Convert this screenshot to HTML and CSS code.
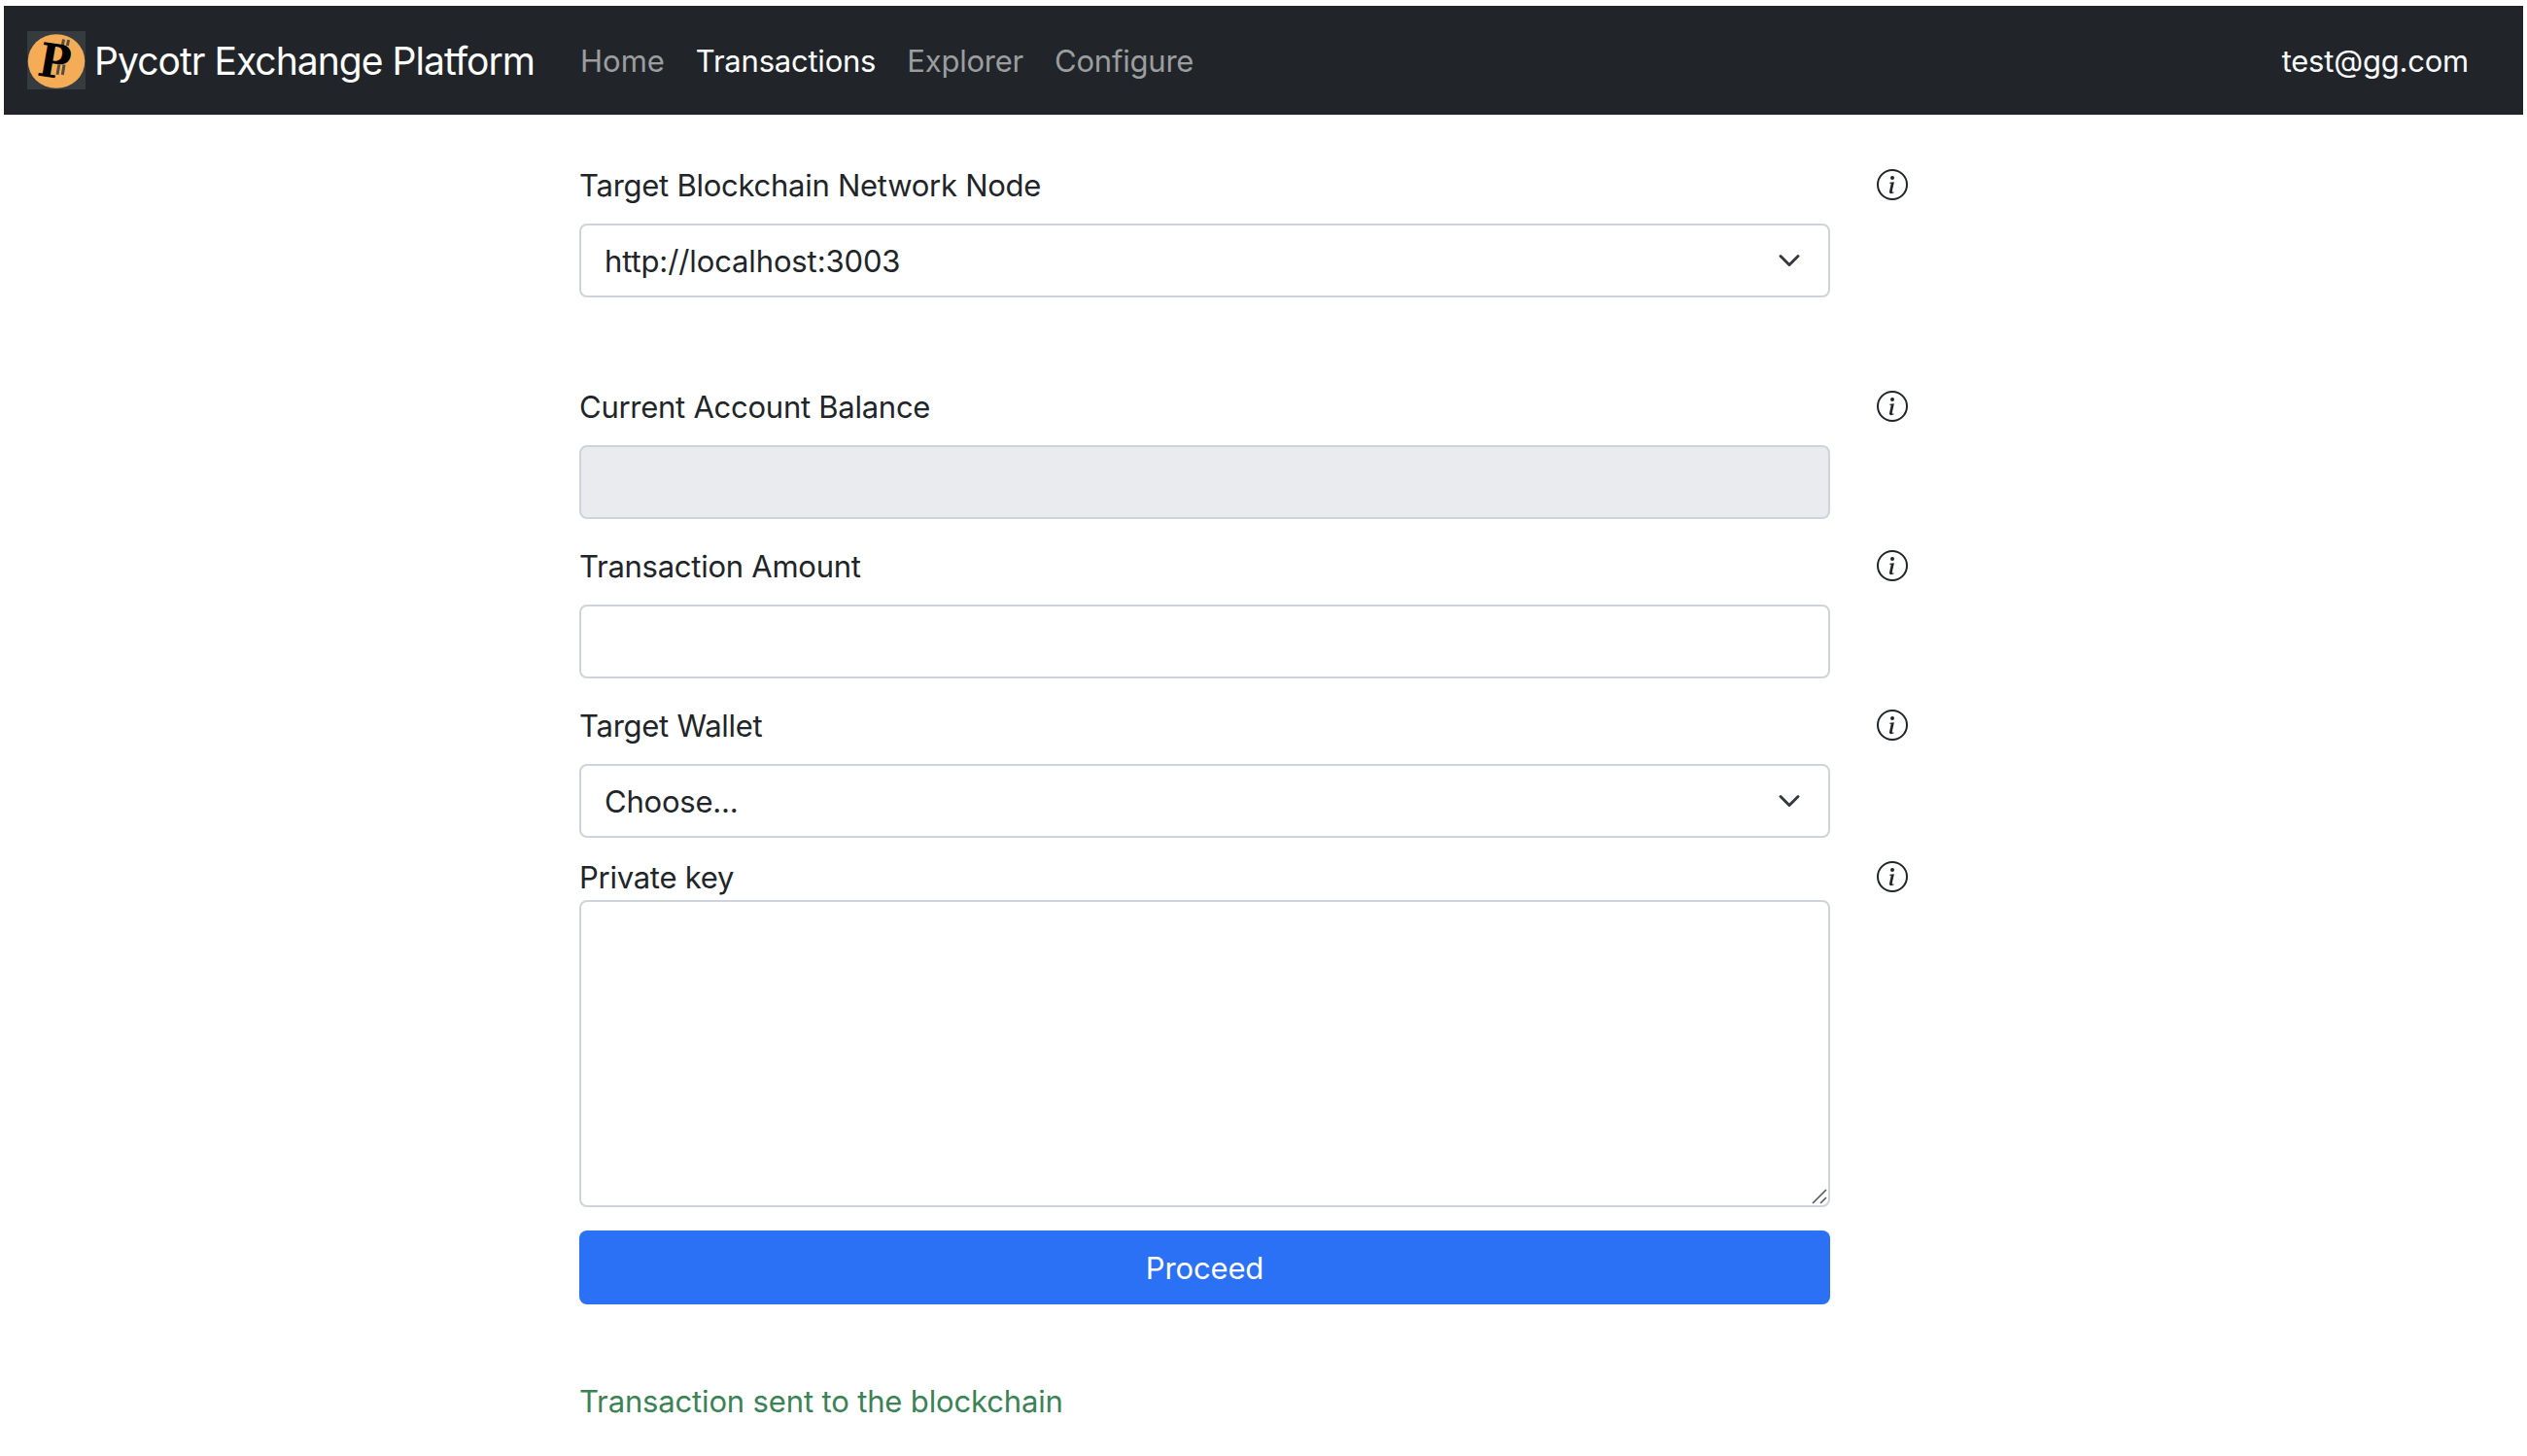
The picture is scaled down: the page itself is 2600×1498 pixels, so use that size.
FILE: index.html
```html
<!DOCTYPE html>
<html lang="en">
<head>
<meta charset="utf-8">
<title>Pycotr Exchange Platform</title>
<link rel="stylesheet" href="styles.css">
</head>
<body>
<svg class="symbols" aria-hidden="true">
  <symbol id="info" viewBox="0 0 16 16">
    <path d="M8 15A7 7 0 1 1 8 1a7 7 0 0 1 0 14zm0 1A8 8 0 1 0 8 0a8 8 0 0 0 0 16z"/>
    <path d="m8.930 6.588-2.290.287-.082.380.450.083c.294.070.352.176.288.469l-.738 3.468c-.194.897.105 1.319.808 1.319.545 0 1.178-.252 1.465-.598l.088-.416c-.200.176-.492.246-.686.246-.275 0-.375-.193-.304-.533L8.930 6.588zM9 4.500a1 1 0 1 1-2 0 1 1 0 0 1 2 0z"/>
  </symbol>
  <symbol id="chevron" viewBox="0 0 16 16">
    <path d="m2 5 6 6 6-6" fill="none" stroke="#343a40" stroke-width="2" stroke-linecap="round" stroke-linejoin="round"/>
  </symbol>
</svg>

<nav class="navbar">
  <a class="brand">
    <svg class="logo" viewBox="0 0 60 60">
      <rect width="60" height="60" fill="#363b3f"/>
      <ellipse cx="30" cy="31" rx="29.300" ry="27.800" fill="#f4ad56"/>
      <path d="M37.500 8.500 36.400 14.500M42.500 9 41.400 15M32.800 34.500 31 44.800M38 34.500 36.300 45" stroke="#524c44" stroke-width="3"/>
      <text class="logo-letter" x="0" y="0" transform="translate(9.200 45.500) rotate(8) skewX(-2) scale(.9 1)">P</text>
    </svg>
    <span class="brand-name">Pycotr Exchange Platform</span>
  </a>
  <div class="nav-links">
    <a class="nav-link nav-home">Home</a>
    <a class="nav-link active">Transactions</a>
    <a class="nav-link">Explorer</a>
    <a class="nav-link">Configure</a>
  </div>
  <span class="user">test@gg.com</span>
</nav>

<main class="form">
  <div class="field field-node">
    <div class="label-row"><label class="label">Target Blockchain Network Node</label><svg class="info"><use href="#info"/></svg></div>
    <div class="control select"><span class="value-url">http://localhost:3003</span><svg class="chevron"><use href="#chevron"/></svg></div>
  </div>
  <div class="field">
    <div class="label-row"><label class="label">Current Account Balance</label><svg class="info"><use href="#info"/></svg></div>
    <input class="control disabled" disabled>
  </div>
  <div class="field">
    <div class="label-row"><label class="label">Transaction Amount</label><svg class="info"><use href="#info"/></svg></div>
    <input class="control">
  </div>
  <div class="field field-wallet">
    <div class="label-row"><label class="label">Target Wallet</label><svg class="info"><use href="#info"/></svg></div>
    <div class="control select"><span class="value">Choose...</span><svg class="chevron"><use href="#chevron"/></svg></div>
  </div>
  <div class="field field-key">
    <div class="label-row"><label class="label">Private key</label><svg class="info"><use href="#info"/></svg></div>
    <div class="key-wrap">
      <textarea class="control key"></textarea>
      <svg class="grip" viewBox="0 0 16 16"><path d="M1 15 15 1M9 15l6-6" stroke="#55585b" stroke-width="1.600"/></svg>
    </div>
  </div>
  <button class="submit">Proceed</button>
  <p class="message">Transaction sent to the blockchain</p>
</main>
</body>
</html>
```
FILE: styles.css
```css
* {
  box-sizing: border-box;
}

body {
  margin: 0;
  padding: 6px 4px 0;
  height: 1498px;
  overflow: hidden;
  background: #fff;
  color: #212529;
  font: 31px/48px Inter, "Liberation Sans", sans-serif;
  letter-spacing: -0.22px;
}

.symbols {
  display: none;
}

.navbar {
  display: flex;
  align-items: center;
  height: 112px;
  padding: 0 56px 0 24px;
  background: #212529;
  box-shadow: inset 0 -1px #251d2a;
}

.brand {
  display: flex;
  align-items: center;
  width: 523px;
  margin-right: 46px;
}

.logo {
  flex: none;
  width: 60px;
  height: 60px;
  margin-right: 9px;
  overflow: visible;
}

.logo-letter {
  font: bold 48px "DejaVu Serif", serif;
  letter-spacing: 0;
  fill: #000;
}

.brand-name {
  padding-top: 2px;
  color: #fff;
  font-size: 39px;
  line-height: 60px;
  letter-spacing: -0.96px;
  white-space: nowrap;
}

.nav-links {
  display: flex;
  gap: 32px;
  padding-top: 2px;
}

.nav-link {
  color: #9b9d9f;
}

.nav-home {
  letter-spacing: 0;
}

.nav-link.active {
  color: #fff;
}

.user {
  margin-left: auto;
  padding-top: 2px;
  color: #f8f9fa;
}

.form {
  width: 1287px;
  margin: 48px 0 0 592px;
}

.field {
  margin-bottom: 24px;
}

.field-node {
  margin-bottom: 88px;
}

.field-wallet {
  margin-bottom: 16px;
}

.label-row {
  display: flex;
  align-items: center;
  justify-content: space-between;
  width: 1367px;
  height: 48px;
  margin-bottom: 16px;
}

.label {
  padding-top: 2px;
  letter-spacing: -0.26px;
}

.info {
  width: 32px;
  height: 32px;
  fill: #212529;
}

.control {
  display: block;
  width: 100%;
  height: 76px;
  padding: 12px 24px;
  border: 2px solid #ced4da;
  border-radius: 8px;
  background: #fff;
  font: inherit;
}

.select {
  display: flex;
  align-items: center;
  justify-content: space-between;
  padding-right: 28px;
}

.value {
  padding-top: 1px;
}

.value-url {
  padding-top: 1px;
  letter-spacing: -0.12px;
}

.chevron {
  width: 24px;
  height: 24px;
}

.disabled {
  background: #e9ebef;
}

.field-key .label-row {
  margin-bottom: 0;
}

.key-wrap {
  position: relative;
}

.key {
  height: 316px;
  resize: none;
}

.grip {
  position: absolute;
  right: 3px;
  bottom: 3px;
  width: 16px;
  height: 16px;
}

.submit {
  display: block;
  width: 100%;
  height: 76px;
  padding: 1px 0 0;
  border: 0;
  border-radius: 8px;
  background: #2b71f5;
  color: #fff;
  font: inherit;
  letter-spacing: -0.13px;
}

.message {
  margin: 76px 0 0;
  color: #3b8257;
  letter-spacing: -0.15px;
}
```
